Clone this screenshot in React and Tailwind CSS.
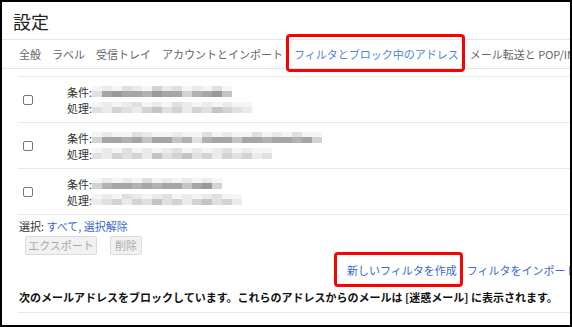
import React from "react";

const SH = [
  "bg-[#9a9a9a]",
  "bg-[#a6a6a6]",
  "bg-[#b2b2b2]",
  "bg-[#c4c4c4]",
  "bg-[#d3d3d3]",
  "bg-[#e0e0e0]",
  "bg-[#ebebeb]",
  "bg-[#f5f5f5]",
];

function Mosaic({ top, bottom }) {
  return (
    <div className="flex flex-col">
      <div className="flex">
        {top.map((v, i) => (
          <div key={i} className={"w-[10px] h-[5px] " + SH[v]} />
        ))}
      </div>
      <div className="flex">
        {bottom.map((v, i) => (
          <div key={i} className={"w-[10px] h-[6px] " + SH[v]} />
        ))}
      </div>
    </div>
  );
}

const rows = [
  {
    c: {
      top: [7, 6, 7, 5, 6, 7, 4, 6, 5, 7, 6, 7, 5, 7],
      bottom: [5, 1, 0, 1, 1, 2, 0, 1, 1, 4, 2, 1, 0, 3],
    },
    p: {
      top: [7, 6, 7, 6, 5, 7, 6, 7, 5, 6, 7, 6, 7, 6, 7, 7],
      bottom: [5, 6, 4, 5, 6, 4, 3, 5, 4, 6, 4, 5, 3, 4, 5, 6],
    },
  },
  {
    c: {
      top: [7, 6, 7, 7, 5, 6, 7, 7, 6, 7, 7, 5, 7, 6, 7, 7, 5, 7, 6, 7, 5, 7, 7],
      bottom: [4, 1, 1, 2, 1, 3, 1, 1, 3, 2, 5, 2, 1, 1, 3, 1, 1, 2, 1, 1, 2, 1, 4],
    },
    p: {
      top: [7, 6, 7, 5, 7, 6, 7, 6, 5, 7, 6, 7, 6, 5, 7, 6, 7, 7],
      bottom: [5, 6, 4, 5, 4, 6, 3, 5, 4, 3, 5, 4, 6, 4, 5, 4, 6, 5],
    },
  },
  {
    c: {
      top: [7, 6, 7, 6, 7, 5, 7, 6, 7, 6, 7, 6, 7],
      bottom: [4, 2, 1, 1, 2, 1, 2, 1, 1, 3, 1, 0, 4],
    },
    p: {
      top: [7, 6, 7, 5, 6, 7, 6, 5, 7, 6, 7, 6, 5, 7, 7],
      bottom: [6, 5, 4, 6, 4, 5, 3, 5, 4, 6, 4, 3, 5, 4, 6],
    },
  },
];

export default function App() {
  return (
    <div
      className="relative w-[572px] h-[327px] overflow-hidden border-2 border-black bg-white text-[#333]"
      style={{ fontFamily: '"Noto Sans CJK JP", "Noto Sans", sans-serif' }}
    >
      {/* title */}
      <div className="h-[38px] flex items-center pl-[11px] text-[18px] text-[#222] border-b border-[#e6e6e6] leading-none">
        設定
      </div>

      {/* tabs */}
      <div className="h-[29px] flex items-center pl-[17px] gap-[11px] text-[11px] text-[#666] border-b border-[#e6e6e6] whitespace-nowrap leading-none">
        <span>全般</span>
        <span>ラベル</span>
        <span>受信トレイ</span>
        <span>アカウントとインポート</span>
        <span className="text-[#4a85df]">フィルタとブロック中のアドレス</span>
        <span>メール転送と POP/IMAP</span>
      </div>

      {/* filter list */}
      <div className="mt-[7px] ml-[16px] border-t border-[#e8e8e8]">
        {rows.map((r, i) => (
          <div
            key={i}
            className="h-[46px] flex items-center border-b border-[#e8e8e8]"
          >
            <div className="ml-[5px] w-[10px] h-[10px] border border-[#777] rounded-[2px]" />
            <div className="ml-[34px] flex flex-col text-[11px] leading-[16px] text-[#333]">
              <div className="flex items-center">
                <span>条件:</span>
                <Mosaic top={r.c.top} bottom={r.c.bottom} />
              </div>
              <div className="flex items-center">
                <span>処理:</span>
                <Mosaic top={r.p.top} bottom={r.p.bottom} />
              </div>
            </div>
          </div>
        ))}
      </div>

      {/* select */}
      <div className="pt-[3px] pl-[17px] text-[11px] leading-[16px] text-[#333]">
        選択: <span className="text-[#3a68cc]">すべて, 選択解除</span>
      </div>
      <div className="mt-[2px] pl-[23px] flex gap-[13px] text-[11px]">
        <div className="w-[72px] h-[19px] flex items-center justify-center bg-[#f1f1f1] border border-[#dcdcdc] rounded-[2px] text-[#aaa]">
          エクスポート
        </div>
        <div className="w-[32px] h-[19px] flex items-center justify-center bg-[#f1f1f1] border border-[#dcdcdc] rounded-[2px] text-[#aaa]">
          削除
        </div>
      </div>

      {/* links */}
      <div className="mt-[7px] pl-[345px] flex gap-[10px] text-[11px] leading-[16px] text-[#3a68cc] whitespace-nowrap">
        <span>新しいフィルタを作成</span>
        <span>フィルタをインポート</span>
      </div>

      {/* blocked */}
      <div className="mt-[11px] ml-[16px] h-[24px] border-b border-[#e8e8e8] pl-[1px] text-[11px] leading-[16px] font-bold text-[#111] whitespace-nowrap">
        次のメールアドレスをブロックしています。これらのアドレスからのメールは [迷惑メール] に表示されます。
      </div>

      {/* annotation boxes */}
      <div className="absolute left-[284px] top-[32px] w-[179px] h-[38px] border-[3px] border-[#ff0000] rounded-[4px]" />
      <div className="absolute left-[332px] top-[250px] w-[129px] h-[35px] border-[3px] border-[#ff0000] rounded-[4px]" />
    </div>
  );
}
